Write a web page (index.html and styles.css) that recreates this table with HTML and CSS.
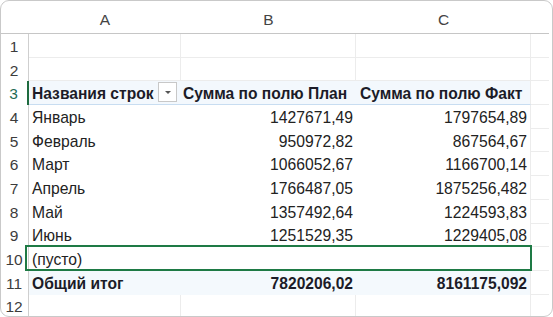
FILE: index.html
```html
<!DOCTYPE html>
<html lang="ru">
<head>
<meta charset="utf-8">
<link rel="stylesheet" href="styles.css">
</head>
<body>
<div class="frame">
  <div class="sheet">
    <div class="hdr">
      <div class="corner"></div>
      <div class="ch">A</div>
      <div class="ch">B</div>
      <div class="ch">C</div>
      <div class="ch"></div>
    </div>

    <div class="row blank">
      <div class="rh">1</div><div class="c"></div><div class="c"></div><div class="c"></div><div class="c"></div>
    </div>
    <div class="row blank">
      <div class="rh">2</div><div class="c"></div><div class="c"></div><div class="c"></div><div class="c"></div>
    </div>

    <div class="row thead">
      <div class="rh active">3</div>
      <div class="c b lab">Названия строк <span class="dd"><span class="tri"></span></span></div>
      <div class="c b">Сумма по полю План</div>
      <div class="c b">Сумма по полю Факт</div>
      <div class="c d"></div>
    </div>

    <div class="row body">
      <div class="rh">4</div><div class="c">Январь</div><div class="c n">1427671,49</div><div class="c n">1797654,89</div><div class="c d"></div>
    </div>
    <div class="row body">
      <div class="rh">5</div><div class="c">Февраль</div><div class="c n">950972,82</div><div class="c n">867564,67</div><div class="c d"></div>
    </div>
    <div class="row body">
      <div class="rh">6</div><div class="c">Март</div><div class="c n">1066052,67</div><div class="c n">1166700,14</div><div class="c d"></div>
    </div>
    <div class="row body">
      <div class="rh">7</div><div class="c">Апрель</div><div class="c n">1766487,05</div><div class="c n">1875256,482</div><div class="c d"></div>
    </div>
    <div class="row body">
      <div class="rh">8</div><div class="c">Май</div><div class="c n">1357492,64</div><div class="c n">1224593,83</div><div class="c d"></div>
    </div>
    <div class="row body">
      <div class="rh">9</div><div class="c">Июнь</div><div class="c n">1251529,35</div><div class="c n">1229405,08</div><div class="c d"></div>
    </div>
    <div class="row body">
      <div class="rh">10</div><div class="c">(пусто)</div><div class="c n"></div><div class="c n"></div><div class="c d"></div>
    </div>
    <div class="row total">
      <div class="rh">11</div><div class="c b">Общий итог</div><div class="c n b">7820206,02</div><div class="c n b">8161175,092</div><div class="c d"></div>
    </div>
    <div class="row blank">
      <div class="rh">12</div><div class="c"></div><div class="c"></div><div class="c"></div><div class="c"></div>
    </div>
  </div>
  <div class="sel"></div>
</div>
</body>
</html>
```

FILE: styles.css
```css
html, body {
  margin: 0;
  padding: 0;
  background: #ffffff;
}

.frame {
  position: relative;
  width: 553px;
  height: 317px;
  box-sizing: border-box;
  border: 1px solid #c9c9c9;
  border-radius: 9px;
  overflow: hidden;
  background: #ffffff;
  font-family: "Liberation Sans", Arial, sans-serif;
  font-size: 15.7px;
  color: #222222;
}

.sheet {
  display: flex;
  flex-direction: column;
  width: 548px;
}

.hdr,
.row {
  display: grid;
  grid-template-columns: 28px 152px 175px 175px 18px;
}

.hdr {
  height: 33px;
  box-sizing: border-box;
  border-bottom: 1px solid #c6c6c6;
}

.ch {
  display: flex;
  align-items: flex-end;
  justify-content: center;
  padding-bottom: 4px;
  color: #444444;
  font-size: 15.5px;
}

.row {
  height: 23.7px;
}

.rh {
  box-sizing: border-box;
  border-right: 1px solid #cfcfcf;
  display: flex;
  align-items: center;
  justify-content: center;
  padding-top: 2px;
  padding-right: 1px;
  color: #3c3c3c;
  font-size: 15.5px;
}

.rh.active {
  border-right: 2px solid #1e6b3f;
  color: #1f6b55;
}

.c {
  box-sizing: border-box;
  display: flex;
  align-items: center;
  padding: 2px 3px 0 3px;
  white-space: nowrap;
  overflow: hidden;
}

.c.n {
  justify-content: flex-end;
}

.b {
  font-weight: 700;
  color: #1c1c28;
  font-size: 15.6px;
}

.blank .c {
  border-right: 1px solid #ececec;
  border-bottom: 1px solid #ececec;
}

.blank .c:last-child {
  border-right: none;
}

.c.d {
  border-bottom: 1px solid #ececec;
}

.body .c:nth-child(4),
.total .c:nth-child(4),
.thead .c:nth-child(4) {
  border-right: 1px solid #ececec;
}

.thead .c:not(.d) {
  background: #f3f8fd;
  border-bottom: 1px solid #c8ddf1;
}

.thead .c:nth-child(3) {
  padding-left: 2px;
}

.thead .c:nth-child(4) {
  padding-left: 4px;
}

.total .c:not(.d) {
  background: #f4f9fd;
}

.lab {
  position: relative;
}

.dd {
  position: absolute;
  left: 129px;
  top: 1px;
  width: 19px;
  height: 20px;
  box-sizing: border-box;
  border: 1px solid #c8c8c8;
  background: #ffffff;
  display: flex;
  align-items: center;
  justify-content: center;
}

.tri {
  width: 0;
  height: 0;
  border-left: 3px solid transparent;
  border-right: 3px solid transparent;
  border-top: 3px solid #555555;
}

.sel {
  position: absolute;
  left: 24px;
  top: 244px;
  width: 507px;
  height: 26px;
  box-sizing: border-box;
  border: 2px solid #1e7a45;
}
```
